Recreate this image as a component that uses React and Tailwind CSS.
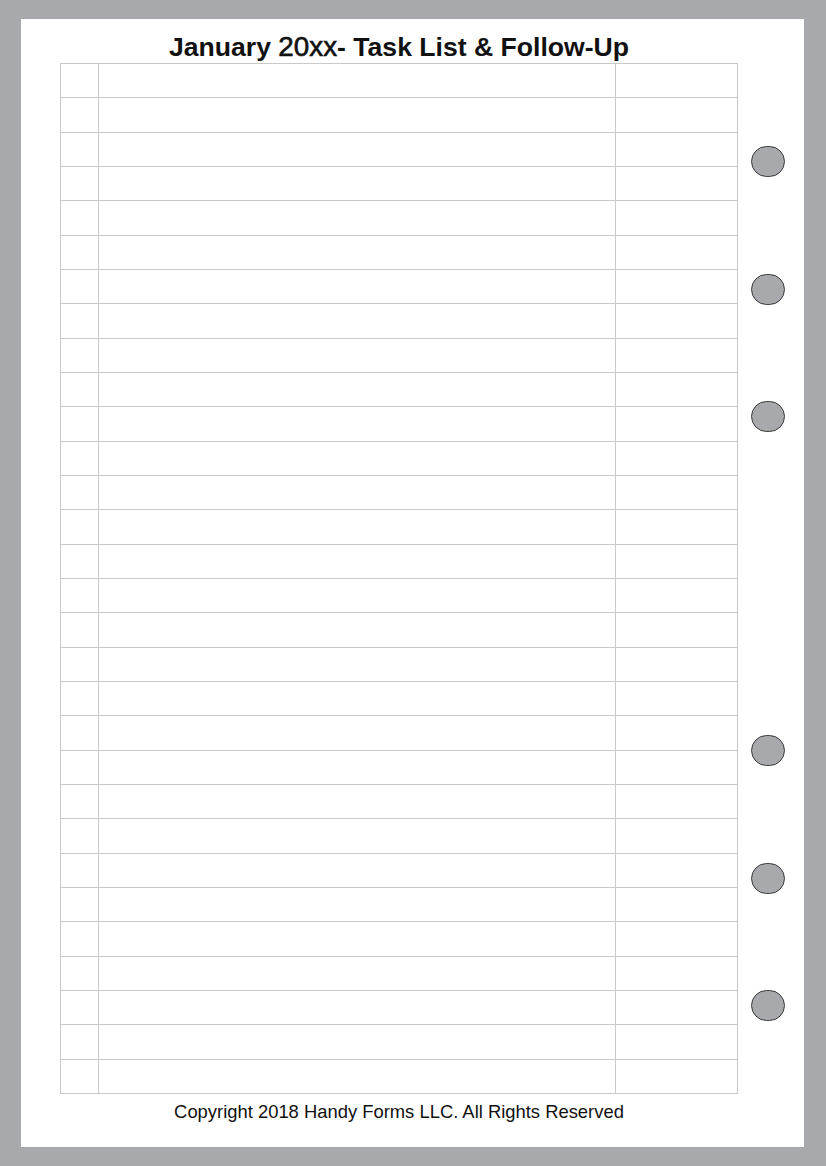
const ROWS = Array.from({ length: 30 }, (_, i) => i);

// top margins for the six binder holes, measured from the table's top edge
const HOLES = ['mt-[83px]', 'mt-[97px]', 'mt-[96px]', 'mt-[303px]', 'mt-[97px]', 'mt-[96px]'];

function App() {
  return (
    <div
      className="w-[826px] h-[1166px] bg-[#a7a9ac] pt-[19px] pl-[21px] pr-[22px] pb-[19px]"
      style={{ fontFamily: '"Liberation Sans", Arial, sans-serif' }}
    >
      <div className="flex h-full bg-white pl-[39px] pt-[13px]">
        <div className="flex w-[678px] flex-col">
          <h1 className="h-[30px] text-center text-[26.6px] font-bold leading-[30px] text-[#111]">
            January{' '}
            <span className="text-[27.8px] font-normal [-webkit-text-stroke:0.6px_#111]">20xx</span>- Task List
            &amp; Follow-Up
          </h1>
          <div className="mt-px grid h-[1031px] grid-cols-[38px_517px_122px] grid-rows-[repeat(30,1fr)] border-l border-t border-[#c9c9c9]">
            {ROWS.map((r) => (
              <div key={r} className="contents">
                <div className="border-b border-r border-[#c9c9c9]" />
                <div className="border-b border-r border-[#c9c9c9]" />
                <div className="border-b border-r border-[#c9c9c9]" />
              </div>
            ))}
          </div>
          <p className="mt-[7px] text-center text-[18.4px] leading-[22px] text-[#111]">
            Copyright 2018 Handy Forms LLC. All Rights Reserved
          </p>
        </div>
        <div className="ml-[13px] flex flex-col pt-[31px]">
          {HOLES.map((m, i) => (
            <div
              key={i}
              className={`${m} h-[31px] w-[34px] rounded-full border border-[#3a3a3a] bg-[#a7a9ac]`}
            />
          ))}
        </div>
      </div>
    </div>
  );
}

export default App;
